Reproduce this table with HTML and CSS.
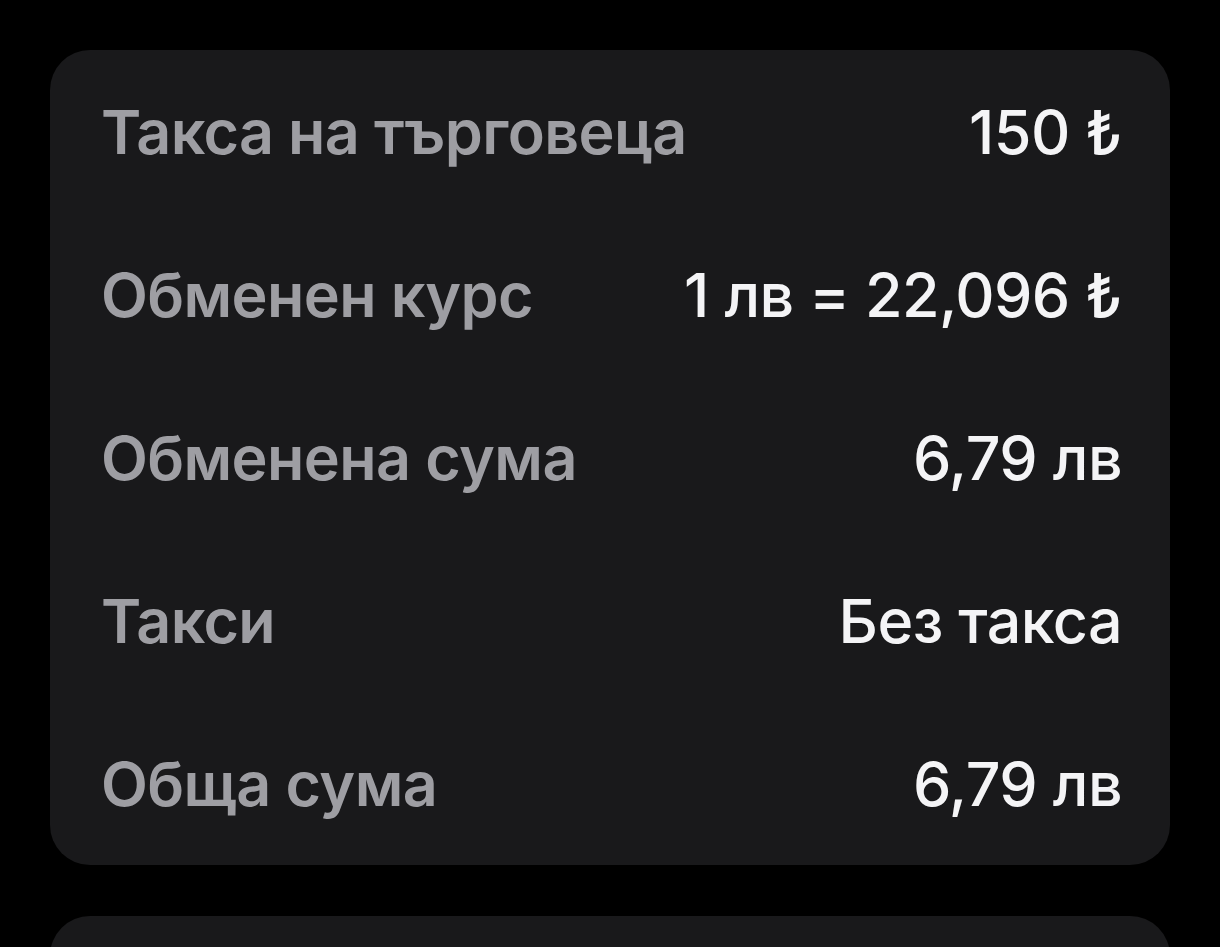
FILE: index.html
```html
<!DOCTYPE html>
<html lang="bg">
<head>
<meta charset="utf-8">
<link rel="stylesheet" href="styles.css">
</head>
<body>
<main class="page">
  <section class="card">
    <div class="row"><span class="label">Такса на търговеца</span><span class="value">150 ₺</span></div>
    <div class="row"><span class="label">Обменен курс</span><span class="value">1 лв = 22,096 ₺</span></div>
    <div class="row"><span class="label">Обменена сума</span><span class="value">6,79 лв</span></div>
    <div class="row"><span class="label">Такси</span><span class="value">Без такса</span></div>
    <div class="row"><span class="label">Обща сума</span><span class="value">6,79 лв</span></div>
  </section>
  <section class="card card-next"></section>
</main>
</body>
</html>
```

FILE: styles.css
```css
html, body {
  margin: 0;
  padding: 0;
  background: #000;
}
body {
  font-family: Inter, "Noto Sans", sans-serif;
  -webkit-font-smoothing: antialiased;
}
.page {
  padding: 50px 50px 0 50px;
  height: 947px;
  box-sizing: border-box;
  overflow: hidden;
  display: flex;
  flex-direction: column;
  gap: 51px;
}
.card {
  background: #19191b;
  border-radius: 40px;
  padding: 46px 48px 45px 51px;
  display: flex;
  flex-direction: column;
  gap: 91px;
}
.card-next {
  height: 200px;
  flex-shrink: 0;
}
.row {
  display: flex;
  justify-content: space-between;
  align-items: baseline;
  font-size: 61px;
  line-height: 72px;
  letter-spacing: -0.6px;
}
.label {
  color: #9e9ea3;
  font-weight: 600;
}
.value {
  color: #f4f4f6;
  font-weight: 500;
}
```
